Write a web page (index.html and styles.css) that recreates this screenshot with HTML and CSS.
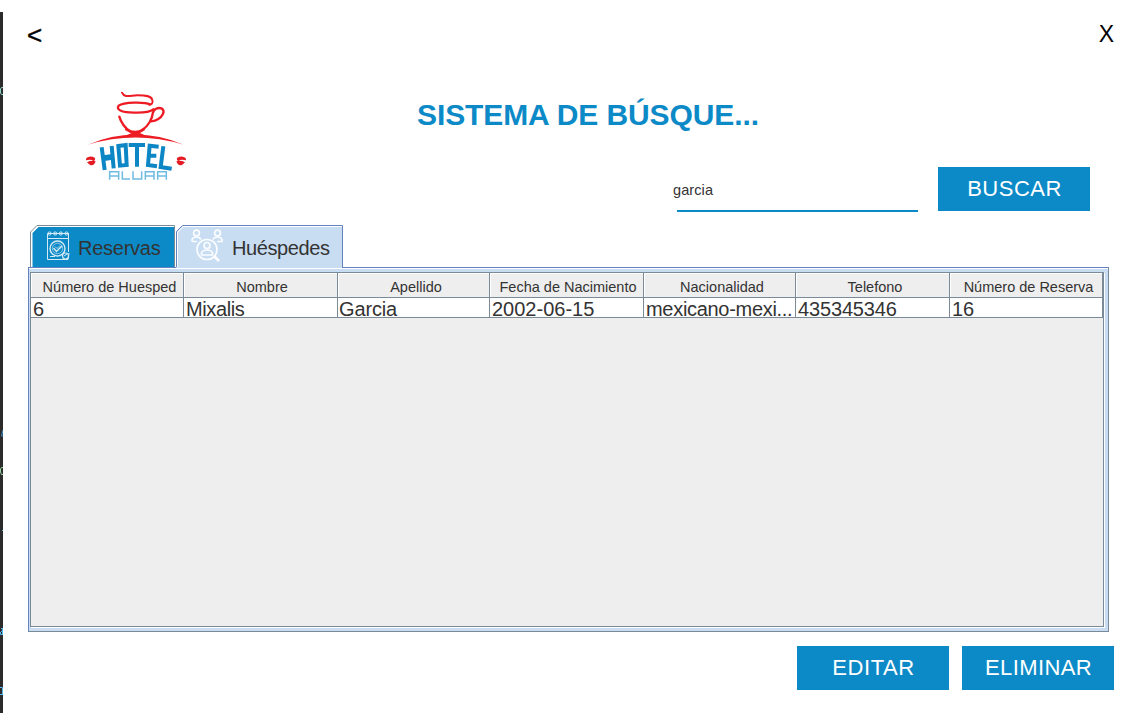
FILE: index.html
```html
<!DOCTYPE html>
<html lang="es">
<head>
<meta charset="utf-8">
<title>Sistema de búsqueda</title>
<link rel="stylesheet" href="styles.css">
</head>
<body>
<aside class="editor-strip">
  <svg width="3" height="701" viewBox="0 12 3 701" fill="none" stroke-width="1">
    <path d="M3 87.500H1.500L.5 89V93L1.500 94.500H3" stroke="#8ed5c8"/>
    <path d="M3 430L1.500 436H3" stroke="#3c91cf"/>
    <path d="M3 467.500H1.500L.5 469V472L1.500 474.500H3" stroke="#9cd5a0"/>
    <path d="M2 530.500H3" stroke="#56b6ee"/>
    <path d="M1 628.500H3M2.500 628V635M1 631.500H3M.5 632V634.500H3" stroke="#56b6ee"/>
    <path d="M0 687.500H2.500V694.500M0 694.500H3" stroke="#56b6ee"/>
  </svg>
</aside>
<main class="window">
  <header class="titlebar"><span class="back">&lt;</span><span class="close">X</span></header>
  <section class="hero">
    <svg class="logo" width="120" height="100" viewBox="0 0 360 300" fill="none">
      <g stroke="#ed1c24" stroke-linecap="round">
        <path d="M138 26C145 43 165 34 184 34C207 34 226 35 229 48C232 59 226 62 220 62" stroke-width="6"/>
        <path d="M222 61C205 53 143 54 128 65C120 75 133 84 161 85C191 87 220 86 232 76" stroke-width="7"/>
        <path d="M130 98C135 116 149 133 163 143C177 150 190 146 198 139C217 126 229 104 230 89C232 76 246 68 258 74C269 82 258 99 247 105Q238 111 225 112" stroke-width="7"/>
        <path d="M151 136Q177 153 203 136" stroke-width="8"/>
      </g>
      <path d="M36 182Q178 121 323 182Q178 139 36 182Z" fill="#ed1c24"/>
      <path d="M160 150Q178 140 199 150L212 157H144Z" fill="#ed1c24"/>
      <g stroke="#0d86c5" stroke-width="12">
        <path d="M77 190L86 258M107 186L113 253"/>
        <path d="M79 223L114 218" stroke-width="17"/>
        <path d="M127 186L149 183L152 243L132 245Z"/>
        <path d="M158 183H207M183 183V248"/>
        <path d="M248 188L221 185L216 243L243 247M219 215H241"/>
        <path d="M262 187L254 249L287 254"/>
      </g>
      <g fill="#e51b24">
        <path d="M31 222Q42 213 56 221Q60 227 53 231Q45 225 30 229ZM33 235Q46 228 59 232Q54 247 42 243Z"/>
        <path d="M329 222Q318 213 304 221Q300 227 307 231Q315 225 330 229ZM327 235Q314 228 301 232Q306 247 318 243Z"/>
      </g>
      <g stroke="#6fbce3" stroke-width="4.500">
        <path d="M101 287V263H128V287M101 276H128"/>
        <path d="M139 262V285H162"/>
        <path d="M171 262V285H197V262"/>
        <path d="M208 287V263H234V287M208 276H234"/>
        <path d="M245 287V263H271V287M245 276H271"/>
      </g>
    </svg>
    <h1 class="heading">SISTEMA DE BÚSQUE...</h1>
    <form class="search">
      <span class="query">garcia</span>
      <button class="btn buscar" type="button">BUSCAR</button>
    </form>
  </section>
  <nav class="tabs">
    <div class="tab reservas">
      <svg class="tab-bg" width="147" height="42" viewBox="0 0 147 42"><path d="M2.500 42V8L9 1.500H144V42Z" fill="#0c8ac7"/><path d="M1.500 42V7.500L8 1.500H144" fill="none" stroke="#fff"/><path d="M.5 42V7L7 .5H144.500V42" fill="none" stroke="#7a8a99"/></svg>
      <svg class="tab-icon cal" width="25" height="32" viewBox="0 0 25 32" fill="none" stroke="#d5eaf5">
        <path d="M1.500 3.500V29.500H17M22.500 3V22M1.500 8.500H22.500" stroke-width="1"/>
        <path d="M2 3.500H22"/>
        <g stroke-width="1"><circle cx="3.500" cy="3.500" r="1.600"/><circle cx="9.200" cy="3.500" r="1.600"/><circle cx="14.800" cy="3.500" r="1.600"/><circle cx="20.500" cy="3.500" r="1.600"/></g>
        <circle cx="11.500" cy="18.500" r="7.500" stroke-width="1.400"/><circle cx="11.500" cy="18.500" r="5.200" stroke-width=".6"/>
        <path d="M7.500 18L10.500 21.500L16 16" stroke-width="1.500"/><path d="M9 16.500L11 18.500L14 15.500" stroke-width=".8"/>
        <circle cx="19.500" cy="26" r="3" stroke-width="1.200"/><path d="M16 29.500H22L23 23M18 26L21 24M4 26.500H9" stroke-width="1"/>
      </svg>
      <span class="t-res">Reservas</span>
    </div>
    <div class="tab huespedes">
      <svg class="tab-bg" width="168" height="43" viewBox="0 0 168 43"><path d="M0 43V7L6 1H167V43Z" fill="#c8ddf2"/><path d="M1.500 42V7.500L7 1.500H166" fill="none" stroke="#fff"/><path d="M.5 42V6.500L6.500 .5H166.500V43" fill="none" stroke="#6382bf"/></svg>
      <svg class="tab-icon ppl" width="34" height="34" viewBox="0 0 34 34" fill="none" stroke="#fafcff" stroke-width="1.700">
        <circle cx="5.500" cy="4" r="2.900"/><path d="M1 12.500V10.500Q2 8 5.500 8T10 10.500M1 12.500H6"/>
        <circle cx="26.500" cy="4" r="2.900"/><path d="M22 10.500Q23 8 26.500 8T31 10.500V12.500H26"/>
        <circle cx="16" cy="20.500" r="10"/><circle cx="16" cy="16.500" r="3"/><path d="M10.500 26V24Q11.500 21 16 21T21.500 24V26H10.500Z"/>
        <path d="M23 27L28 32" stroke-width="2.800"/>
      </svg>
      <span class="t-hue">Huéspedes</span>
    </div>
  </nav>
  <section class="panel">
    <div class="viewport">
      <div class="grid head">
        <span>Número de Huesped</span><span class="shift">Nombre</span><span>Apellido</span><span class="shift">Fecha de Nacimiento</span><span>Nacionalidad</span><span>Telefono</span><span>Número de Reserva</span>
      </div>
      <div class="grid row">
        <span>6</span><span class="name">Mixalis</span><span class="surname">Garcia</span><span>2002-06-15</span><span class="nation">mexicano-mexi...</span><span class="phone">435345346</span><span>16</span>
      </div>
    </div>
  </section>
  <footer class="actions">
    <button class="btn editar" type="button">EDITAR</button>
    <button class="btn eliminar" type="button">ELIMINAR</button>
  </footer>
</main>
</body>
</html>
```
FILE: styles.css
```css
* { box-sizing: border-box; }
body { margin: 0; width: 1129px; height: 713px; overflow: hidden; display: flex; background: #fff; color: #333; font-family: "Liberation Sans", Arial, sans-serif; }
.editor-strip { width: 3px; height: 701px; margin-top: 12px; background: #2b2b2b; flex: none; }
.editor-strip svg { display: block; }
.window { width: 1126px; height: 713px; display: flex; flex-direction: column; padding-left: 25px; }
.titlebar { height: 84px; display: flex; justify-content: space-between; padding: 20px 15px 0 0; color: #000; font-size: 26px; line-height: 31px; flex: none; }
.back { margin-left: -1px; -webkit-text-stroke: .4px #000; }
.close { font-size: 23px; line-height: 29px; }
.hero { height: 141px; flex: none; display: grid; grid-template-columns: 168px 222px 1fr; grid-template-rows: 83px 58px; padding-left: 48px; }
.logo { grid-row: 1 / 3; }
.heading { grid-column: 2 / 4; margin: 0; padding: 13px 0 0 173px; color: #0c8ac7; font-size: 30px; line-height: 36px; letter-spacing: -.1px; white-space: nowrap; }
.search { grid-column: 2 / 4; margin: 0; display: flex; justify-content: flex-end; padding-right: 39px; }
.query { width: 241px; height: 45px; border-bottom: 2px solid #0c8ac7; margin-right: 20px; font-size: 14.500px; line-height: 46px; text-indent: -4px; letter-spacing: .1px; }
.btn { width: 152px; height: 44px; padding: 0; border: 0; background: #0c8ac7; color: #fff; font: 22px/44px "Liberation Sans", Arial, sans-serif; flex: none; }
.buscar { letter-spacing: .5px; padding-left: 1px; }
.tabs { height: 42px; display: flex; padding-left: 2px; flex: none; }
.tab { position: relative; height: 43px; display: flex; font-size: 20px; line-height: 46px; z-index: 1; }
.reservas { width: 146px; padding-left: 15px; }
.huespedes { width: 168px; padding-left: 15px; }
.tab-bg { position: absolute; left: 0; top: 0; }
.tab-icon { position: relative; flex: none; }
.cal { margin: 5px 8px 0 1px; }
.ppl { margin: 4px 7px 0 0; }
.tab span { position: relative; white-space: nowrap; }
.t-res { letter-spacing: -.25px; margin-left: -1px; }
.t-hue { letter-spacing: -.4px; }
.panel { width: 1081px; height: 365px; flex: none; border: 1px solid #6382bf; border-right-color: #7a8a99; border-bottom-color: #7a8a99; background: #c8ddf2; padding: 4px 4px 4px 1px; box-shadow: inset 0 1px #fff; }
.viewport { height: 355px; width: 1074px; border: 1px solid #7a8a99; box-shadow: 1px 1px #fff; background: #eee; }
.grid { display: grid; grid-template-columns: 153px 154px 152px 154px 152px 154px 153px; width: 1072px; }
.grid span { white-space: nowrap; border-right: 1px solid #7a8a99; border-bottom: 1px solid #7a8a99; }
.head { height: 25px; font-size: 14.500px; line-height: 28px; text-align: center; }
.head span { height: 25px; box-shadow: inset 1px 1px #fff; padding-left: 5px; }
.head .shift { padding-left: 3px; }
.row { height: 20px; font-size: 20px; line-height: 22px; background: #fff; }
.row span { height: 20px; padding-left: 2px; }
.row .name { letter-spacing: -.4px; }
.row .surname { letter-spacing: -.15px; padding-left: 1px; }
.row .nation { letter-spacing: -.3px; }
.row .phone { letter-spacing: -.15px; }
.actions { height: 58px; display: flex; gap: 13px; padding: 14px 0 0 769px; flex: none; }
.editar, .eliminar { letter-spacing: .55px; padding-left: 1px; }
.eliminar { letter-spacing: .4px; }
```
